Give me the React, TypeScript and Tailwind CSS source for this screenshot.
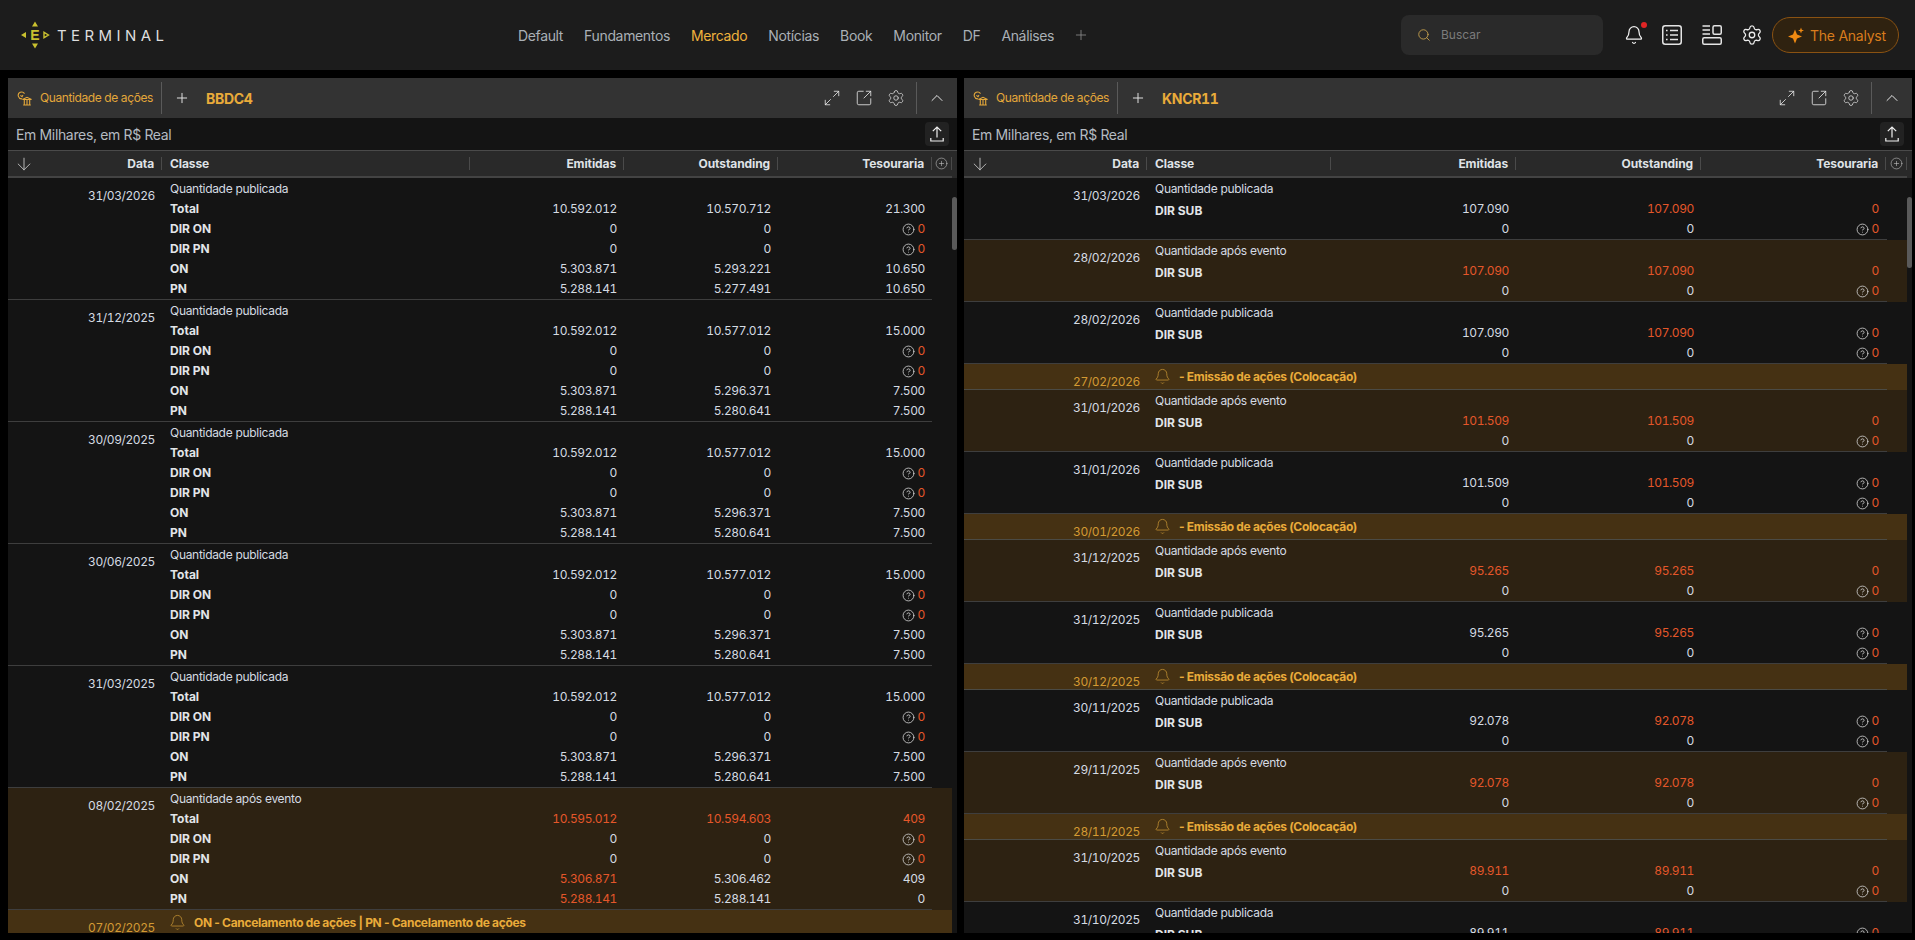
import { ArrowDown, Bell, ChevronUp, CircleHelp, CirclePlus, Maximize2, Plus, Search, Settings, SquareArrowOutUpRight } from "lucide-react";

const FONT = "font-['Inter','Noto_Sans',sans-serif]";

type Cell = { v: string; red?: boolean; q?: boolean };
type Row = { label: string; cells: [Cell, Cell, Cell] };
type Item =
  | { kind: "group"; date: string; after?: boolean; rows: Row[] }
  | { kind: "event"; date: string; text: string };

const w = (v: string): Cell => ({ v });
const r = (v: string): Cell => ({ v, red: true });
const q: Cell = { v: "0", red: true, q: true };

function bbdcRows(total: string, tTes: string, on: string, onT: string, pn: string, pnT: string, totalOut: string, onOut: string, pnOut: string): Row[] {
  return [
    { label: "Total", cells: [w(total), w(totalOut), w(tTes)] },
    { label: "DIR ON", cells: [w("0"), w("0"), q] },
    { label: "DIR PN", cells: [w("0"), w("0"), q] },
    { label: "ON", cells: [w(on), w(onOut), w(onT)] },
    { label: "PN", cells: [w(pn), w(pnOut), w(pnT)] },
  ];
}
const std = () => bbdcRows("10.592.012", "15.000", "5.303.871", "7.500", "5.288.141", "7.500", "10.577.012", "5.296.371", "5.280.641");

const left: Item[] = [
  { kind: "group", date: "31/03/2026", rows: bbdcRows("10.592.012", "21.300", "5.303.871", "10.650", "5.288.141", "10.650", "10.570.712", "5.293.221", "5.277.491") },
  { kind: "group", date: "31/12/2025", rows: std() },
  { kind: "group", date: "30/09/2025", rows: std() },
  { kind: "group", date: "30/06/2025", rows: std() },
  { kind: "group", date: "31/03/2025", rows: std() },
  {
    kind: "group",
    date: "08/02/2025",
    after: true,
    rows: [
      { label: "Total", cells: [r("10.595.012"), r("10.594.603"), r("409")] },
      { label: "DIR ON", cells: [w("0"), w("0"), q] },
      { label: "DIR PN", cells: [w("0"), w("0"), q] },
      { label: "ON", cells: [r("5.306.871"), w("5.306.462"), w("409")] },
      { label: "PN", cells: [r("5.288.141"), w("5.288.141"), w("0")] },
    ],
  },
  { kind: "event", date: "07/02/2025", text: "ON - Cancelamento de ações | PN - Cancelamento de ações" },
];

const after = (date: string, v: string): Item => ({
  kind: "group",
  date,
  after: true,
  rows: [
    { label: "DIR SUB", cells: [r(v), r(v), r("0")] },
    { label: "", cells: [w("0"), w("0"), q] },
  ],
});
const pub = (date: string, v: string, plain?: boolean): Item => ({
  kind: "group",
  date,
  rows: [
    { label: "DIR SUB", cells: [w(v), r(v), plain ? r("0") : q] },
    { label: "", cells: [w("0"), w("0"), q] },
  ],
});
const emis = (date: string): Item => ({ kind: "event", date, text: "- Emissão de ações (Colocação)" });

const right: Item[] = [
  pub("31/03/2026", "107.090", true),
  after("28/02/2026", "107.090"),
  pub("28/02/2026", "107.090"),
  emis("27/02/2026"),
  after("31/01/2026", "101.509"),
  pub("31/01/2026", "101.509"),
  emis("30/01/2026"),
  after("31/12/2025", "95.265"),
  pub("31/12/2025", "95.265"),
  emis("30/12/2025"),
  pub("30/11/2025", "92.078"),
  after("29/11/2025", "92.078"),
  emis("28/11/2025"),
  after("31/10/2025", "89.911"),
  pub("31/10/2025", "89.911"),
];

const NAV = ["Default", "Fundamentos", "Mercado", "Notícias", "Book", "Monitor", "DF", "Análises"];

function Logo() {
  return (
    <div className="flex items-center gap-[7px]">
      <svg width="30" height="30" viewBox="0 0 30 30" className="text-[#c9c02f]">
        <path d="M15 1.500l3 5h-6z M15 28.500l-3-5h6z M1 15l5-3v6z" fill="currentColor" />
        <path d="M28.500 15l-4.500-2.700v5.400z" fill="none" stroke="currentColor" strokeWidth="1.400" />
        <text x="15" y="20" textAnchor="middle" fontSize="14" fontWeight="700" fill="currentColor" fontFamily="Liberation Sans">E</text>
      </svg>
      <span className="font-['Inter',sans-serif] text-[15px] font-normal leading-none tracking-[4.4px] text-[#dedede]">TERMINAL</span>
    </div>
  );
}

function ListIcon() {
  return (
    <svg width="20" height="20" viewBox="0 0 20 20" fill="none" stroke="#e4e4e4" strokeWidth="1.500">
      <rect x="0.750" y="0.750" width="18.500" height="18.500" rx="2.500" />
      <path d="M4 5.500h1.600M4 10h1.600M4 14.500h1.600M8 5.500h8M8 10h8M8 14.500h8" />
    </svg>
  );
}

function LayoutIcon() {
  return (
    <svg width="20" height="20" viewBox="0 0 20 20" fill="none" stroke="#e4e4e4" strokeWidth="1.500">
      <path d="M0.500 1h7.500M0.500 5h7.500M0.500 9h7.500" />
      <rect x="11" y="0.750" width="8.250" height="8.500" rx="1.500" />
      <rect x="0.750" y="12.750" width="18.500" height="6.500" rx="1.500" />
    </svg>
  );
}

function Sparkle() {
  return (
    <svg width="16" height="17" viewBox="0 0 16 17" fill="#f08a12">
      <path d="M7 2.500L9 7.500L14 9.500L9 11.500L7 16.500L5 11.500L0 9.500L5 7.500Z" />
      <path d="M13 0.500L13.800 2.700L16 3.500L13.800 4.300L13 6.500L12.200 4.300L10 3.500L12.200 2.700Z" />
    </svg>
  );
}

function PanelIcon() {
  return (
    <svg width="15" height="15" viewBox="0 0 15 15" fill="none" stroke="#e3a73a" strokeWidth="1.100">
      <path d="M5.200 7.800A3.400 3.400 0 1 1 7.500 2.600" />
      <path d="M3.400 4.400l1.600 1.300 1-1.600" />
      <path d="M5.500 8.500L10 6.300l4.500 2.200zM6.200 14h7.600M7.300 9v4.500M10 9v4.500M12.700 9v4.500" />
    </svg>
  );
}

function UploadIcon() {
  return (
    <svg width="16" height="16" viewBox="0 0 16 16" fill="none" stroke="#f0f0f0" strokeWidth="1.200">
      <path d="M8 11.500V1M3.800 5.200L8 1l4.200 4.200M1.800 12v3h12.400v-3" />
    </svg>
  );
}

function NumCell({ cell }: { cell: Cell }) {
  return (
    <div className="flex h-5 items-center justify-end gap-[3px] pr-[7px]">
      {cell.q && <CircleHelp size={13} strokeWidth={1.500} className="text-[#d4d4d4]" />}
      <span className={`tabular-nums tracking-[-0.4px] ${cell.red ? "text-[#e4572a]" : "text-[#d5dbe2]"}`}>{cell.v}</span>
    </div>
  );
}

function GroupRow({ item, cols }: { item: Extract<Item, { kind: "group" }>; cols: string }) {
  const title = item.after ? "Quantidade após evento" : "Quantidade publicada";
  return (
    <div className={item.after ? "bg-[#2d2212]" : ""}>
      <div className={`mr-[20px] grid border-b border-[#3e3e3e] pt-px ${cols}`}>
        <div className="pr-[7px] pt-[7px] text-right leading-5 tabular-nums tracking-[-0.4px] text-[#d5dbe2]">{item.date}</div>
        <div className="pl-[8px]">
          <div className="flex h-5 items-center tracking-[-0.3px] text-[#d5dbe2]">{title}</div>
          {item.rows.map((row, i) => (
            <div key={i} className={`flex h-5 items-center font-bold text-[#e2e5e8] ${row.label === "DIR SUB" ? "pt-[3px]" : ""}`}>{row.label}</div>
          ))}
        </div>
        {[0, 1, 2].map((c) => (
          <div key={c}>
            <div className="h-5" />
            {item.rows.map((row, i) => (
              <NumCell key={i} cell={row.cells[c]} />
            ))}
          </div>
        ))}
      </div>
    </div>
  );
}

function EventRow({ item, cols }: { item: Extract<Item, { kind: "event" }>; cols: string }) {
  return (
    <div className="bg-[#453113]">
      <div className={`mr-[20px] grid h-[26px] border-b border-[#4b4b45] ${cols}`}>
        <div className="pr-[7px] pt-[8px] text-right leading-5 tabular-nums tracking-[-0.4px] text-[#d39a33]">{item.date}</div>
        <div className="col-span-4 flex h-[26px] items-center gap-[8px] pb-[1px] pl-[7px] font-bold tracking-[-0.32px] text-[#e9ab3a]">
          <Bell size={17} strokeWidth={1.200} className="text-[#b98a30]" />
          <span>{item.text}</span>
        </div>
      </div>
    </div>
  );
}

function HeadCell({ children, left: isLeft }: { children: string; left?: boolean }) {
  return (
    <div className="flex items-center">
      <span className={`flex-1 font-bold tracking-[-0.1px] text-[#dfe2e6] ${isLeft ? "pl-[8px]" : "pr-[7px] text-right"}`}>{children}</span>
      <span className="h-[13px] w-px bg-[#4a4a4a]" />
    </div>
  );
}

function Panel({
  ticker, items, cols, width, thumb,
}: { ticker: string; items: Item[]; cols: string; width: string; thumb: string }) {
  return (
    <section className={`flex h-full flex-col overflow-hidden bg-[#141414] ${width}`}>
      <div className="flex h-10 shrink-0 items-center bg-[#333333]">
        <div className="flex h-8 w-[154px] items-center gap-[8px] border-r border-[#5a5a5a] pl-[9px]">
          <PanelIcon />
          <span className="whitespace-nowrap text-[12px] tracking-[-0.4px] text-[#e3a73a]">Quantidade de ações</span>
        </div>
        <Plus size={16} strokeWidth={1.500} className="ml-[12px] text-[#e0e0e0]" />
        <span className="ml-[16px] text-[14px] font-bold tabular-nums tracking-[-0.3px] text-[#e9ab3a]">{ticker}</span>
        <div className="ml-auto flex items-center text-[#e8e8e8]">
          <Maximize2 size={18} strokeWidth={1.100} className="mr-[14px]" />
          <SquareArrowOutUpRight size={18} strokeWidth={1.100} className="mr-[14px]" />
          <Settings size={18} strokeWidth={1.100} className="mr-[11px] text-[#d4d4d4]" />
          <div className="h-8 border-l border-[#5a5a5a]" />
          <ChevronUp size={20} strokeWidth={1.200} className="ml-[10px] mr-[10px]" />
        </div>
      </div>
      <div className="flex h-8 shrink-0 items-center justify-between pl-2 pr-2">
        <span className="text-[14px] tracking-[-0.35px] text-[#b5bbc2]">Em Milhares, em R$ Real</span>
        <button className="flex h-6 w-6 items-center justify-center rounded bg-[#222222]"><UploadIcon /></button>
      </div>
      <div className="h-[28px] shrink-0 border-t border-[#4a4a4a] bg-[#292929]">
        <div className="mr-[5px] flex h-full border-b-2 border-[#434343]">
          <div className={`grid h-full flex-1 ${cols}`}>
            <div className="flex items-center">
              <ArrowDown size={20} strokeWidth={1} className="ml-[6px] text-[#d0d0d0]" />
              <span className="flex-1 pr-[7px] text-right font-bold tracking-[-0.1px] text-[#dfe2e6]">Data</span>
              <span className="h-[13px] w-px bg-[#4a4a4a]" />
            </div>
            <HeadCell left>Classe</HeadCell>
            <HeadCell>Emitidas</HeadCell>
            <HeadCell>Outstanding</HeadCell>
            <HeadCell>Tesouraria</HeadCell>
          </div>
          <div className="flex w-5 items-center">
            <CirclePlus size={13} strokeWidth={1} className="mx-auto text-[#cfcfcf]" />
            <span className="h-[13px] w-px bg-[#4a4a4a]" />
          </div>
        </div>
      </div>
      <div className="flex min-h-0 flex-1">
        <div className="min-w-0 flex-1 overflow-hidden">
          {items.map((it, i) =>
            it.kind === "group" ? <GroupRow key={i} item={it} cols={cols} /> : <EventRow key={i} item={it} cols={cols} />,
          )}
        </div>
        <div className="w-[5px] shrink-0 pt-[19px]">
          <div className={`w-[5px] rounded-full bg-[#5a5a5a] ${thumb}`} />
        </div>
      </div>
    </section>
  );
}

export default function App() {
  return (
    <div className={`flex h-[940px] w-[1915px] flex-col overflow-hidden bg-black text-[12px] ${FONT}`}>
      <header className="flex h-[70px] shrink-0 items-center bg-[#1c1c1c]">
        <div className="ml-[20px] w-[498px]"><Logo /></div>
        <nav className="flex items-center gap-[21px] text-[14px] tracking-[-0.35px] text-[#aab0b6]">
          {NAV.map((n) => (
            <span key={n} className={n === "Mercado" ? "text-[#efb23c]" : ""}>{n}</span>
          ))}
          <Plus size={16} strokeWidth={1.300} className="-ml-[2px] text-[#8a8a8a]" />
        </nav>
        <div className="ml-auto flex items-center">
          <div className="flex h-10 w-[202px] items-center gap-[10px] rounded-lg bg-[#2a2a2a] pl-[16px]">
            <Search size={14} strokeWidth={1.500} className="text-[#c8a24e]" />
            <span className="text-[12px] text-[#7c7c7c]">Buscar</span>
          </div>
          <div className="relative ml-[21px] mr-[18px] flex">
            <Bell size={20} strokeWidth={1.500} className="text-[#f0f0f0]" />
            <span className="absolute right-[-3px] top-[-3px] h-[6px] w-[6px] rounded-full bg-[#e02525]" />
          </div>
          <div className="mr-[20px]"><ListIcon /></div>
          <div className="mr-[19px]"><LayoutIcon /></div>
          <Settings size={22} strokeWidth={1.400} className="mr-[9px] text-[#ececec]" />
          <button className="mr-[16px] flex h-9 w-[127px] items-center gap-[6px] rounded-full border border-[#8a5212] bg-[#2f2210] pl-[15px] text-[14px] tracking-[-0.25px] text-[#d97c1c]">
            <Sparkle />
            <span>The Analyst</span>
          </button>
        </div>
      </header>
      <main className="flex min-h-0 flex-1 gap-[7px] pb-[7px] pl-2 pt-2">
        <Panel ticker="BBDC4" items={left} cols="grid-cols-[154px_308px_154px_154px_154px]" width="w-[949px]" thumb="h-[53px]" />
        <Panel ticker="KNCR11" items={right} cols="grid-cols-[183px_184px_185px_185px_185px]" width="w-[948px]" thumb="h-[71px]" />
      </main>
    </div>
  );
}
